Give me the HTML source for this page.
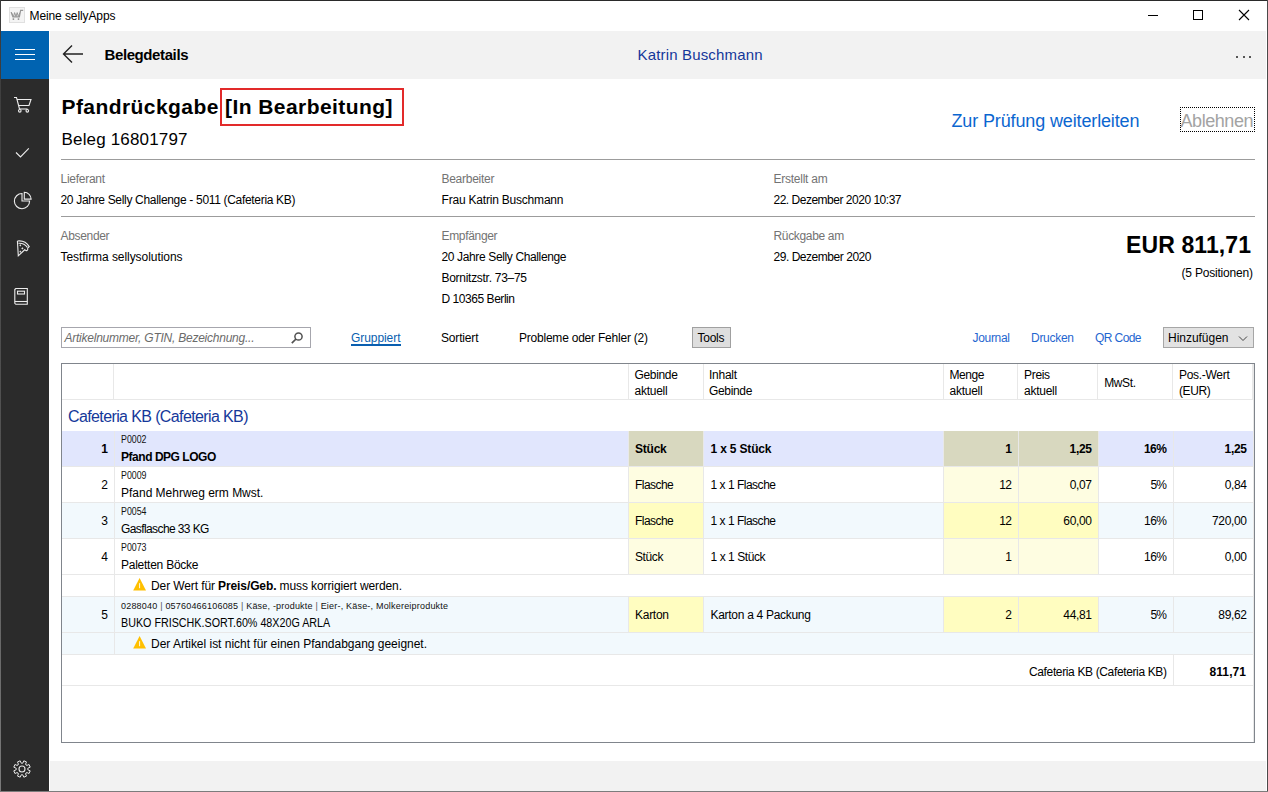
<!DOCTYPE html>
<html><head><meta charset="utf-8">
<style>
*{margin:0;padding:0;box-sizing:border-box}
html,body{width:1268px;height:792px;overflow:hidden;background:#fff;font-family:"Liberation Sans",sans-serif;color:#000}
.a{position:absolute}
.t{position:absolute;white-space:pre}
.hl{position:absolute;height:1px;background:#e8e8e8}
.vl{position:absolute;width:1px;background:#e8e8e8}
svg{position:absolute;overflow:visible}
</style></head><body>
<!-- window border -->
<div class="a" style="left:0;top:0;width:1268px;height:1px;background:#2a2a2a"></div>
<div class="a" style="left:0;top:0;width:1px;height:792px;background:linear-gradient(#3a3a3a,#555 60%,#7a7a7a)"></div>
<div class="a" style="left:1267px;top:0;width:1px;height:792px;background:#4a4a4a"></div>
<div class="a" style="left:0;top:791px;width:1268px;height:1px;background:#7c7c7c"></div>

<!-- title bar icon -->
<div class="a" style="left:9px;top:7px;width:16px;height:16px;background:#f4f4f4;border:1px solid #e0e0e0"></div>
<svg style="left:9px;top:7px" width="16" height="16" viewBox="0 0 16 16">
 <path d="M14.2 3.3 L11.6 3.3 L10.4 9.9 L3.9 9.9 L2.2 5.2" fill="none" stroke="#969696" stroke-width="1.15"/>
 <path d="M2.2 5.2 L4.6 9.6 L5.6 5.6 L7 9.6 L8.2 5.6 L9.4 9.6 L10.9 5.6" fill="none" stroke="#969696" stroke-width="1"/>
 <path d="M4.4 11.2 L4.4 13 M9.5 11.2 L9.5 13" stroke="#969696" stroke-width="1.5"/>
</svg>
<!-- window controls -->
<div class="a" style="left:1148px;top:15px;width:10px;height:1px;background:#000"></div>
<div class="a" style="left:1193px;top:10px;width:10px;height:10px;border:1px solid #000"></div>
<svg style="left:1239px;top:10px" width="10" height="10" viewBox="0 0 10 10"><path d="M0 0 L10 10 M10 0 L0 10" stroke="#000" stroke-width="1.1"/></svg>

<!-- sidebar -->
<div class="a" style="left:1px;top:31px;width:48px;height:48px;background:#0063b1"></div>
<div class="a" style="left:1px;top:79px;width:48px;height:712px;background:#2b2b2b"></div>
<div class="a" style="left:15px;top:49px;width:20px;height:1px;background:#fff"></div>
<div class="a" style="left:15px;top:54px;width:20px;height:1px;background:#fff"></div>
<div class="a" style="left:15px;top:59px;width:20px;height:1px;background:#fff"></div>
<!-- cart -->
<svg style="left:0;top:0" width="50" height="320" viewBox="0 0 50 320">
 <g fill="none" stroke="#ececec" stroke-width="1.1">
  <path d="M14 97.5 L16.5 97.5 L19.5 109"/>
  <path d="M17 99.5 L31 99.5 L29 105.5 L18.5 105.5"/>
  <path d="M19.5 109 L27.5 109"/>
  <circle cx="19.8" cy="110.8" r="1.3"/><circle cx="27.3" cy="110.8" r="1.3"/>
  <!-- check -->
  <path d="M16 152.5 L20.5 157 L28.8 148.3" stroke-width="1.1"/>
  <!-- pie -->
  <path d="M22 193.5 A7.6 7.6 0 1 0 29.6 201 L22 201 Z"/>
  <path d="M24.3 192.3 L24.3 199.1 L31.1 199.1 A6.8 6.8 0 0 0 24.3 192.3 Z"/>
  <!-- pizza -->
  <path d="M17.4 241 L18.3 255.8 L25 249.5"/>
  <path d="M17.4 241 C22 240.4 26.8 242.6 29.2 246.6 L27.4 248.3"/>
  <path d="M18.4 243.3 C22 243 25.4 244.6 27.4 247.3"/>
  <path d="M25 249.5 A1.4 1.4 0 1 0 27.4 248.3"/>
  <!-- book -->
  <path d="M14.8 289.5 L15.8 288.5 L27.3 288.5 L27.3 304.3 L15.8 304.3 L14.8 303.3 Z"/>
  <path d="M14.8 301.5 L27.3 301.5"/>
  <rect x="17.5" y="291.2" width="7" height="2.8"/>
 </g>
 <g fill="#e6e6e6"><path d="M20.3 244.2 L21.3 245.3 L20.3 246.4 L19.3 245.3 Z M22.4 247.2 L23.5 248.4 L22.4 249.6 L21.3 248.4 Z M20.3 250.6 L21.3 251.7 L20.3 252.8 L19.3 251.7 Z"/></g>
</svg>
<!-- gear -->
<svg style="left:7.4px;top:753.5px" width="30" height="30" viewBox="-15 -15 30 30">
 <path id="gear" fill="none" stroke="#e6e6e6" stroke-width="1" d="M0.00 -5.60 L0.97 -6.12 L1.82 -8.20 L4.51 -7.08 L3.64 -5.02 L3.96 -3.96 L5.02 -3.64 L7.08 -4.51 L8.20 -1.82 L6.12 -0.97 L5.60 -0.00 L6.12 0.97 L8.20 1.82 L7.08 4.51 L5.02 3.64 L3.96 3.96 L3.64 5.02 L4.51 7.08 L1.82 8.20 L0.97 6.12 L0.00 5.60 L-0.97 6.12 L-1.82 8.20 L-4.51 7.08 L-3.64 5.02 L-3.96 3.96 L-5.02 3.64 L-7.08 4.51 L-8.20 1.82 L-6.12 0.97 L-5.60 0.00 L-6.12 -0.97 L-8.20 -1.82 L-7.08 -4.51 L-5.02 -3.64 L-3.96 -3.96 L-3.64 -5.02 L-4.51 -7.08 L-1.82 -8.20 L-0.97 -6.12 Z"/>
 <circle cx="0" cy="0" r="3" fill="none" stroke="#e6e6e6" stroke-width="1.1"/>
</svg>

<!-- toolbar -->
<div class="a" style="left:50px;top:31px;width:1216px;height:48px;background:#f2f2f2"></div>
<svg style="left:62px;top:44px" width="24" height="20" viewBox="0 0 24 20">
 <path d="M21 10 L2 10 M10 1.5 L1.5 10 L10 18.5" fill="none" stroke="#222" stroke-width="1.4"/>
</svg>
<div class="a" style="left:1236px;top:55.5px;width:2.2px;height:2.2px;background:#222;border-radius:50%"></div>
<div class="a" style="left:1242.5px;top:55.5px;width:2.2px;height:2.2px;background:#222;border-radius:50%"></div>
<div class="a" style="left:1249px;top:55.5px;width:2.2px;height:2.2px;background:#222;border-radius:50%"></div>

<!-- header -->
<div class="a" style="left:220px;top:88px;width:184px;height:38px;border:2px solid #e22a2a"></div>
<div class="a" style="left:1180px;top:107px;width:75px;height:25px;border:1px dotted #000"></div>
<div class="a" style="left:61px;top:159px;width:1194px;height:1px;background:#9c9c9c"></div>
<div class="a" style="left:61px;top:216px;width:1194px;height:1px;background:#9c9c9c"></div>

<!-- search etc -->
<div class="a" style="left:61px;top:327px;width:250px;height:21px;border:1px solid #a6a6ad"></div>
<svg style="left:290px;top:331px" width="14" height="14" viewBox="0 0 14 14">
 <circle cx="8.5" cy="5.5" r="3.6" fill="none" stroke="#505050" stroke-width="1.5"/>
 <path d="M6 8 L1.8 12.2" stroke="#505050" stroke-width="1.7"/>
</svg>
<div class="a" style="left:351px;top:344px;width:50px;height:2px;background:#0a5fb0"></div>
<div class="a" style="left:692px;top:327px;width:39px;height:21px;background:#dedede;border:1px solid #a0a0a0"></div>
<div class="a" style="left:1163px;top:327px;width:91px;height:21px;background:#e2e2e2;border:1px solid #a6a6a6"></div>
<svg style="left:1238px;top:335px" width="10" height="7" viewBox="0 0 10 7"><path d="M1 1.5 L5 5.5 L9 1.5" fill="none" stroke="#444" stroke-width="1"/></svg>

<!-- table -->
<div class="a" style="left:61px;top:363px;width:1194px;height:380px;border:1px solid #80858c"></div>
<div class="hl" style="left:62px;top:399px;width:1191px"></div>
<div class="vl" style="left:113px;top:364px;height:35px;background:#e8e8e8"></div>
<div class="vl" style="left:628px;top:364px;height:35px;background:#e8e8e8"></div>
<div class="vl" style="left:703px;top:364px;height:35px;background:#e8e8e8"></div>
<div class="vl" style="left:943px;top:364px;height:35px;background:#e8e8e8"></div>
<div class="vl" style="left:1017px;top:364px;height:35px;background:#e8e8e8"></div>
<div class="vl" style="left:1097px;top:364px;height:35px;background:#e8e8e8"></div>
<div class="vl" style="left:1172px;top:364px;height:35px;background:#e8e8e8"></div>
<div class="vl" style="left:1252px;top:364px;height:35px;background:#e8e8e8"></div>
<div class="a" style="left:62px;top:431px;width:1191px;height:35px;background:#e1e6fd"></div>
<div class="a" style="left:629px;top:431px;width:74px;height:35px;background:#d8d8bf"></div>
<div class="a" style="left:944px;top:431px;width:74px;height:35px;background:#d8d8bf"></div>
<div class="a" style="left:1019px;top:431px;width:79px;height:35px;background:#d8d8bf"></div>
<div class="vl" style="left:114px;top:431px;height:35px;background:#e8e8e8"></div>
<div class="vl" style="left:628px;top:431px;height:35px;background:#e8e8e8"></div>
<div class="vl" style="left:703px;top:431px;height:35px;background:#e8e8e8"></div>
<div class="vl" style="left:943px;top:431px;height:35px;background:#e8e8e8"></div>
<div class="vl" style="left:1018px;top:431px;height:35px;background:#e8e8e8"></div>
<div class="vl" style="left:1098px;top:431px;height:35px;background:#e8e8e8"></div>
<div class="vl" style="left:1173px;top:431px;height:35px;background:#e8e8e8"></div>
<div class="hl" style="left:62px;top:466px;width:1191px;background:#e8e8e8"></div>
<div class="a" style="left:62px;top:467px;width:1191px;height:35px;background:#ffffff"></div>
<div class="a" style="left:629px;top:467px;width:74px;height:35px;background:#fefde1"></div>
<div class="a" style="left:944px;top:467px;width:74px;height:35px;background:#fefde1"></div>
<div class="a" style="left:1019px;top:467px;width:79px;height:35px;background:#fefde1"></div>
<div class="vl" style="left:114px;top:467px;height:35px;background:#e8e8e8"></div>
<div class="vl" style="left:628px;top:467px;height:35px;background:#e8e8e8"></div>
<div class="vl" style="left:703px;top:467px;height:35px;background:#e8e8e8"></div>
<div class="vl" style="left:943px;top:467px;height:35px;background:#e8e8e8"></div>
<div class="vl" style="left:1018px;top:467px;height:35px;background:#e8e8e8"></div>
<div class="vl" style="left:1098px;top:467px;height:35px;background:#e8e8e8"></div>
<div class="vl" style="left:1173px;top:467px;height:35px;background:#e8e8e8"></div>
<div class="hl" style="left:62px;top:502px;width:1191px;background:#e8e8e8"></div>
<div class="a" style="left:62px;top:503px;width:1191px;height:35px;background:#f2f9fd"></div>
<div class="a" style="left:629px;top:503px;width:74px;height:35px;background:#fffdc0"></div>
<div class="a" style="left:944px;top:503px;width:74px;height:35px;background:#fffdc0"></div>
<div class="a" style="left:1019px;top:503px;width:79px;height:35px;background:#fffdc0"></div>
<div class="vl" style="left:114px;top:503px;height:35px;background:#e8e8e8"></div>
<div class="vl" style="left:628px;top:503px;height:35px;background:#e8e8e8"></div>
<div class="vl" style="left:703px;top:503px;height:35px;background:#e8e8e8"></div>
<div class="vl" style="left:943px;top:503px;height:35px;background:#e8e8e8"></div>
<div class="vl" style="left:1018px;top:503px;height:35px;background:#e8e8e8"></div>
<div class="vl" style="left:1098px;top:503px;height:35px;background:#e8e8e8"></div>
<div class="vl" style="left:1173px;top:503px;height:35px;background:#e8e8e8"></div>
<div class="hl" style="left:62px;top:538px;width:1191px;background:#e8e8e8"></div>
<div class="a" style="left:62px;top:539px;width:1191px;height:35px;background:#ffffff"></div>
<div class="a" style="left:629px;top:539px;width:74px;height:35px;background:#fefde1"></div>
<div class="a" style="left:944px;top:539px;width:74px;height:35px;background:#fefde1"></div>
<div class="a" style="left:1019px;top:539px;width:79px;height:35px;background:#fefde1"></div>
<div class="vl" style="left:114px;top:539px;height:35px;background:#e8e8e8"></div>
<div class="vl" style="left:628px;top:539px;height:35px;background:#e8e8e8"></div>
<div class="vl" style="left:703px;top:539px;height:35px;background:#e8e8e8"></div>
<div class="vl" style="left:943px;top:539px;height:35px;background:#e8e8e8"></div>
<div class="vl" style="left:1018px;top:539px;height:35px;background:#e8e8e8"></div>
<div class="vl" style="left:1098px;top:539px;height:35px;background:#e8e8e8"></div>
<div class="vl" style="left:1173px;top:539px;height:35px;background:#e8e8e8"></div>
<div class="hl" style="left:62px;top:574px;width:1191px;background:#e8e8e8"></div>
<div class="a" style="left:62px;top:597px;width:1191px;height:35px;background:#f2f9fd"></div>
<div class="a" style="left:629px;top:597px;width:74px;height:35px;background:#fffdc0"></div>
<div class="a" style="left:944px;top:597px;width:74px;height:35px;background:#fffdc0"></div>
<div class="a" style="left:1019px;top:597px;width:79px;height:35px;background:#fffdc0"></div>
<div class="vl" style="left:114px;top:597px;height:35px;background:#e8e8e8"></div>
<div class="vl" style="left:628px;top:597px;height:35px;background:#e8e8e8"></div>
<div class="vl" style="left:703px;top:597px;height:35px;background:#e8e8e8"></div>
<div class="vl" style="left:943px;top:597px;height:35px;background:#e8e8e8"></div>
<div class="vl" style="left:1018px;top:597px;height:35px;background:#e8e8e8"></div>
<div class="vl" style="left:1098px;top:597px;height:35px;background:#e8e8e8"></div>
<div class="vl" style="left:1173px;top:597px;height:35px;background:#e8e8e8"></div>
<div class="hl" style="left:62px;top:632px;width:1191px;background:#e8e8e8"></div>
<div class="a" style="left:62px;top:575px;width:1191px;height:21px;background:#ffffff"></div>
<div class="vl" style="left:114px;top:575px;height:21px;background:#e8e8e8"></div>
<div class="hl" style="left:62px;top:596px;width:1191px;background:#e8e8e8"></div>
<div class="a" style="left:62px;top:633px;width:1191px;height:21px;background:#f2f9fd"></div>
<div class="vl" style="left:114px;top:633px;height:21px;background:#e8e8e8"></div>
<div class="hl" style="left:62px;top:654px;width:1191px;background:#e8e8e8"></div>
<div class="vl" style="left:1173px;top:655px;height:30px;background:#e8e8e8"></div>
<div class="hl" style="left:62px;top:685px;width:1191px;background:#e8e8e8"></div>
<div class="vl" style="left:1253px;top:364px;height:378px;background:#e8e8e8"></div>
<svg style="left:132px;top:577px" width="16" height="16" viewBox="0 0 16 16"><path d="M7.6 1 L14 13.4 L1.2 13.4 Z" fill="#ffc000"/><path d="M7.6 6.2 L7.6 11.2" stroke="#fff" stroke-width="0.9"/></svg>
<svg style="left:132px;top:635px" width="16" height="16" viewBox="0 0 16 16"><path d="M7.6 1 L14 13.4 L1.2 13.4 Z" fill="#ffc000"/><path d="M7.6 6.2 L7.6 11.2" stroke="#fff" stroke-width="0.9"/></svg>

<!-- bottom bar -->
<div class="a" style="left:50px;top:761px;width:1216px;height:30px;background:#f2f2f2"></div>

<div class="t" style="left:29.50px;top:10px;font-size:12px;line-height:12px;letter-spacing:-0.098px;">Meine sellyApps</div>
<div class="t" style="left:104.50px;top:47px;font-size:15px;line-height:15px;font-weight:700;letter-spacing:-0.398px;">Belegdetails</div>
<div class="t" style="left:637.50px;top:47px;font-size:15px;line-height:15px;color:#14379a;letter-spacing:0.161px;">Katrin Buschmann</div>
<div class="t" style="left:61.50px;top:96px;font-size:21px;line-height:21px;font-weight:700;letter-spacing:0.429px;">Pfandrückgabe [In Bearbeitung]</div>
<div class="t" style="left:61.50px;top:131px;font-size:17px;line-height:17px;letter-spacing:0.166px;">Beleg 16801797</div>
<div class="t" style="left:951.50px;top:112px;font-size:18px;line-height:18px;color:#0b66d0;letter-spacing:-0.135px;">Zur Prüfung weiterleiten</div>
<div class="t" style="left:1180.50px;top:112px;font-size:18px;line-height:18px;color:#a3a3a3;letter-spacing:-0.440px;">Ablehnen</div>
<div class="t" style="left:60.50px;top:173px;font-size:12px;line-height:12px;color:#737373;letter-spacing:-0.263px;">Lieferant</div>
<div class="t" style="left:441.50px;top:173px;font-size:12px;line-height:12px;color:#737373;letter-spacing:-0.277px;">Bearbeiter</div>
<div class="t" style="left:773.50px;top:173px;font-size:12px;line-height:12px;color:#737373;letter-spacing:-0.255px;">Erstellt am</div>
<div class="t" style="left:60.50px;top:194px;font-size:12px;line-height:12px;letter-spacing:-0.317px;">20 Jahre Selly Challenge - 5011 (Cafeteria KB)</div>
<div class="t" style="left:441.50px;top:194px;font-size:12px;line-height:12px;letter-spacing:-0.203px;">Frau Katrin Buschmann</div>
<div class="t" style="left:773.50px;top:194px;font-size:12px;line-height:12px;letter-spacing:-0.489px;">22. Dezember 2020 10:37</div>
<div class="t" style="left:60.50px;top:230px;font-size:12px;line-height:12px;color:#737373;letter-spacing:-0.330px;">Absender</div>
<div class="t" style="left:441.50px;top:230px;font-size:12px;line-height:12px;color:#737373;letter-spacing:-0.330px;">Empfänger</div>
<div class="t" style="left:773.50px;top:230px;font-size:12px;line-height:12px;color:#737373;letter-spacing:-0.333px;">Rückgabe am</div>
<div class="t" style="left:60.50px;top:251px;font-size:12px;line-height:12px;letter-spacing:-0.060px;">Testfirma sellysolutions</div>
<div class="t" style="left:441.50px;top:251px;font-size:12px;line-height:12px;letter-spacing:-0.366px;">20 Jahre Selly Challenge</div>
<div class="t" style="left:441.50px;top:272px;font-size:12px;line-height:12px;letter-spacing:-0.285px;">Bornitzstr. 73–75</div>
<div class="t" style="left:441.50px;top:293px;font-size:12px;line-height:12px;letter-spacing:-0.453px;">D 10365 Berlin</div>
<div class="t" style="left:773.50px;top:251px;font-size:12px;line-height:12px;letter-spacing:-0.463px;">29. Dezember 2020</div>
<div class="t" style="left:1126.00px;top:234px;font-size:23px;line-height:23px;font-weight:700;letter-spacing:0.108px;">EUR 811,71</div>
<div class="t" style="left:1181.50px;top:267px;font-size:12px;line-height:12px;letter-spacing:-0.196px;">(5 Positionen)</div>
<div class="t" style="left:64.50px;top:332px;font-size:12px;line-height:12px;color:#6b6b6b;letter-spacing:-0.238px;font-style:italic;">Artikelnummer, GTIN, Bezeichnung...</div>
<div class="t" style="left:351.00px;top:332px;font-size:12px;line-height:12px;color:#0a5fb0;letter-spacing:-0.066px;">Gruppiert</div>
<div class="t" style="left:441.00px;top:332px;font-size:12px;line-height:12px;letter-spacing:-0.170px;">Sortiert</div>
<div class="t" style="left:519.00px;top:332px;font-size:12px;line-height:12px;letter-spacing:-0.220px;">Probleme oder Fehler (2)</div>
<div class="t" style="left:697.50px;top:332px;font-size:12px;line-height:12px;letter-spacing:-0.254px;">Tools</div>
<div class="t" style="left:972.50px;top:332px;font-size:12px;line-height:12px;color:#1f66d0;letter-spacing:-0.310px;">Journal</div>
<div class="t" style="left:1031.00px;top:332px;font-size:12px;line-height:12px;color:#1f66d0;letter-spacing:-0.281px;">Drucken</div>
<div class="t" style="left:1095.00px;top:332px;font-size:12px;line-height:12px;color:#1f66d0;letter-spacing:-0.589px;">QR Code</div>
<div class="t" style="left:1168.00px;top:332px;font-size:12px;line-height:12px;letter-spacing:-0.024px;">Hinzufügen</div>
<div class="t" style="left:634.50px;top:369px;font-size:12px;line-height:12px;letter-spacing:-0.340px;">Gebinde</div>
<div class="t" style="left:634.50px;top:385px;font-size:12px;line-height:12px;letter-spacing:-0.260px;">aktuell</div>
<div class="t" style="left:709.00px;top:369px;font-size:12px;line-height:12px;letter-spacing:-0.264px;">Inhalt</div>
<div class="t" style="left:709.00px;top:385px;font-size:12px;line-height:12px;letter-spacing:-0.340px;">Gebinde</div>
<div class="t" style="left:949.50px;top:369px;font-size:12px;line-height:12px;letter-spacing:-0.413px;">Menge</div>
<div class="t" style="left:949.50px;top:385px;font-size:12px;line-height:12px;letter-spacing:-0.260px;">aktuell</div>
<div class="t" style="left:1024.00px;top:369px;font-size:12px;line-height:12px;letter-spacing:-0.308px;">Preis</div>
<div class="t" style="left:1024.00px;top:385px;font-size:12px;line-height:12px;letter-spacing:-0.260px;">aktuell</div>
<div class="t" style="left:1179.00px;top:369px;font-size:12px;line-height:12px;letter-spacing:-0.299px;">Pos.-Wert</div>
<div class="t" style="left:1179.00px;top:385px;font-size:12px;line-height:12px;letter-spacing:-0.375px;">(EUR)</div>
<div class="t" style="left:1104.20px;top:377px;font-size:12px;line-height:12px;letter-spacing:-0.375px;">MwSt.</div>
<div class="t" style="left:68.00px;top:409px;font-size:16px;line-height:16px;color:#15389a;letter-spacing:-0.617px;">Cafeteria KB (Cafeteria KB)</div>
<div class="t" style="left:101.31px;top:443px;font-size:12px;line-height:12px;font-weight:700;">1</div>
<div class="t" style="left:121.00px;top:435px;font-size:10px;line-height:10px;color:#111;transform:scaleX(0.8817);transform-origin:0 0;">P0002</div>
<div class="t" style="left:121.00px;top:451px;font-size:12px;line-height:12px;font-weight:700;letter-spacing:-0.465px;">Pfand DPG LOGO</div>
<div class="t" style="left:635.00px;top:443px;font-size:12px;line-height:12px;font-weight:700;letter-spacing:-0.222px;">Stück</div>
<div class="t" style="left:710.50px;top:443px;font-size:12px;line-height:12px;font-weight:700;letter-spacing:-0.170px;">1 x 5 Stück</div>
<div class="t" style="left:1005.31px;top:443px;font-size:12px;line-height:12px;font-weight:700;">1</div>
<div class="t" style="left:1069.58px;top:443px;font-size:12px;line-height:12px;font-weight:700;letter-spacing:-0.311px;">1,25</div>
<div class="t" style="left:1143.93px;top:443px;font-size:12px;line-height:12px;font-weight:700;letter-spacing:-0.481px;">16%</div>
<div class="t" style="left:1224.58px;top:443px;font-size:12px;line-height:12px;font-weight:700;letter-spacing:-0.311px;">1,25</div>
<div class="t" style="left:101.31px;top:479px;font-size:12px;line-height:12px;">2</div>
<div class="t" style="left:121.00px;top:471px;font-size:10px;line-height:10px;color:#111;transform:scaleX(0.8817);transform-origin:0 0;">P0009</div>
<div class="t" style="left:121.00px;top:487px;font-size:12px;line-height:12px;letter-spacing:-0.014px;">Pfand Mehrweg erm Mwst.</div>
<div class="t" style="left:635.00px;top:479px;font-size:12px;line-height:12px;letter-spacing:-0.539px;">Flasche</div>
<div class="t" style="left:710.50px;top:479px;font-size:12px;line-height:12px;letter-spacing:-0.490px;">1 x 1 Flasche</div>
<div class="t" style="left:999.24px;top:479px;font-size:12px;line-height:12px;letter-spacing:-0.601px;">12</div>
<div class="t" style="left:1069.69px;top:479px;font-size:12px;line-height:12px;letter-spacing:-0.350px;">0,07</div>
<div class="t" style="left:1150.44px;top:479px;font-size:12px;line-height:12px;letter-spacing:-0.780px;">5%</div>
<div class="t" style="left:1224.69px;top:479px;font-size:12px;line-height:12px;letter-spacing:-0.350px;">0,84</div>
<div class="t" style="left:101.31px;top:515px;font-size:12px;line-height:12px;">3</div>
<div class="t" style="left:121.00px;top:507px;font-size:10px;line-height:10px;color:#111;transform:scaleX(0.8817);transform-origin:0 0;">P0054</div>
<div class="t" style="left:121.00px;top:523px;font-size:12px;line-height:12px;letter-spacing:-0.599px;">Gasflasche 33 KG</div>
<div class="t" style="left:635.00px;top:515px;font-size:12px;line-height:12px;letter-spacing:-0.539px;">Flasche</div>
<div class="t" style="left:710.50px;top:515px;font-size:12px;line-height:12px;letter-spacing:-0.490px;">1 x 1 Flasche</div>
<div class="t" style="left:999.24px;top:515px;font-size:12px;line-height:12px;letter-spacing:-0.601px;">12</div>
<div class="t" style="left:1063.32px;top:515px;font-size:12px;line-height:12px;letter-spacing:-0.338px;">60,00</div>
<div class="t" style="left:1144.05px;top:515px;font-size:12px;line-height:12px;letter-spacing:-0.541px;">16%</div>
<div class="t" style="left:1211.95px;top:515px;font-size:12px;line-height:12px;letter-spacing:-0.330px;">720,00</div>
<div class="t" style="left:101.31px;top:551px;font-size:12px;line-height:12px;">4</div>
<div class="t" style="left:121.00px;top:543px;font-size:10px;line-height:10px;color:#111;transform:scaleX(0.8817);transform-origin:0 0;">P0073</div>
<div class="t" style="left:121.00px;top:559px;font-size:12px;line-height:12px;letter-spacing:-0.248px;">Paletten Böcke</div>
<div class="t" style="left:635.00px;top:551px;font-size:12px;line-height:12px;letter-spacing:-0.404px;">Stück</div>
<div class="t" style="left:710.50px;top:551px;font-size:12px;line-height:12px;letter-spacing:-0.438px;">1 x 1 Stück</div>
<div class="t" style="left:1005.31px;top:551px;font-size:12px;line-height:12px;">1</div>
<div class="t" style="left:1144.05px;top:551px;font-size:12px;line-height:12px;letter-spacing:-0.541px;">16%</div>
<div class="t" style="left:1224.69px;top:551px;font-size:12px;line-height:12px;letter-spacing:-0.350px;">0,00</div>
<div class="t" style="left:101.31px;top:609px;font-size:12px;line-height:12px;">5</div>
<div class="t" style="left:121.00px;top:602px;font-size:9px;line-height:9px;color:#111;letter-spacing:0.199px;">0288040 <span style="color:#555">|</span> 05760466106085 <span style="color:#555">|</span> Käse, -produkte <span style="color:#555">|</span> Eier-, Käse-, Molkereiprodukte</div>
<div class="t" style="left:121.00px;top:617px;font-size:12px;line-height:12px;transform:scaleX(0.8945);transform-origin:0 0;">BUKO FRISCHK.SORT.60% 48X20G ARLA</div>
<div class="t" style="left:635.00px;top:609px;font-size:12px;line-height:12px;letter-spacing:-0.272px;">Karton</div>
<div class="t" style="left:710.50px;top:609px;font-size:12px;line-height:12px;letter-spacing:-0.294px;">Karton a 4 Packung</div>
<div class="t" style="left:1005.31px;top:609px;font-size:12px;line-height:12px;">2</div>
<div class="t" style="left:1063.32px;top:609px;font-size:12px;line-height:12px;letter-spacing:-0.338px;">44,81</div>
<div class="t" style="left:1150.44px;top:609px;font-size:12px;line-height:12px;letter-spacing:-0.780px;">5%</div>
<div class="t" style="left:1218.32px;top:609px;font-size:12px;line-height:12px;letter-spacing:-0.338px;">89,62</div>
<div class="t" style="left:151.00px;top:579.5px;font-size:12px;line-height:12px;letter-spacing:-0.106px;">Der Wert für <b>Preis/Geb.</b> muss korrigiert werden.</div>
<div class="t" style="left:151.00px;top:637.5px;font-size:12px;line-height:12px;letter-spacing:-0.016px;">Der Artikel ist nicht für einen Pfandabgang geeignet.</div>
<div class="t" style="left:1029.00px;top:666px;font-size:12px;line-height:12px;letter-spacing:-0.362px;">Cafeteria KB (Cafeteria KB)</div>
<div class="t" style="left:1209.50px;top:666px;font-size:12px;line-height:12px;font-weight:700;letter-spacing:0.091px;">811,71</div>
</body></html>
